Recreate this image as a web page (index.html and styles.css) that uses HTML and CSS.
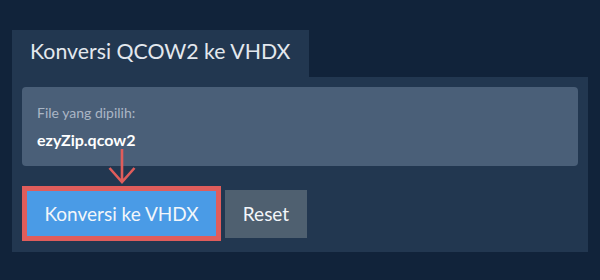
FILE: index.html
```html
<!DOCTYPE html>
<html lang="id">
<head>
    <meta charset="UTF-8">
    <meta name="viewport" content="width=device-width, initial-scale=1.0">
    <title>Konversi QCOW2 ke VHDX</title>
    <link rel="stylesheet" href="styles.css">
</head>
<body>
    <div class="converter">
        <div class="tab">Konversi QCOW2 ke VHDX</div>
        <div class="panel">
            <div class="file-box">
                <div class="file-label">File yang dipilih:</div>
                <div class="file-name">ezyZip.qcow2</div>
            </div>
            <!-- panah penunjuk ke tombol konversi -->
            <svg class="arrow" width="28" height="35" viewBox="0 0 28 35">
                <path d="M14 0 V33 M1.5 19 L14 33 L26.5 19" fill="none" stroke="#e05d5b" stroke-width="2.6"/>
            </svg>
            <div class="actions">
                <button class="btn btn-convert">Konversi ke VHDX</button>
                <button class="btn btn-reset">Reset</button>
            </div>
        </div>
    </div>
</body>
</html>
```

FILE: styles.css
```css
* {
    padding: 0;
    margin: 0;
    box-sizing: border-box;
}
body {
    background-color: #11233a;
    font-family: Lato, "Liberation Sans", sans-serif;
    padding: 30px 12px 0;
}
.tab {
    display: inline-block;
    width: 297px;
    height: 47px;
    padding: 8px 0 0 18px;
    background-color: #223750;
    color: #e3e8ee;
    font-size: 21.3px;
    line-height: 26px;
}
.panel {
    position: relative;
    background-color: #223750;
    padding: 10px 10px 11px;
}
.file-box {
    height: 79px;
    padding: 17px 15px 0;
    background-color: #4a5f78;
    border-radius: 4px;
}
.file-label {
    color: #aab6c5;
    font-size: 14px;
    line-height: 18px;
}
.file-name {
    margin-top: 8px;
    color: #ffffff;
    font-size: 16px;
    font-weight: bold;
    line-height: 20px;
}
.arrow {
    position: absolute;
    left: 96px;
    top: 72px;
}
.actions {
    display: flex;
    align-items: center;
    gap: 4px;
    margin-top: 20px;
}
.btn {
    border: none;
    font-family: Lato, "Liberation Sans", sans-serif;
    font-size: 19px;
    color: #f2f6fa;
}
.btn-convert {
    width: 199px;
    height: 55px;
    background-color: #4a9be6;
    border: 5px solid #e05d5b;
}
.btn-reset {
    width: 82px;
    height: 48px;
    background-color: #4f6070;
}
```
